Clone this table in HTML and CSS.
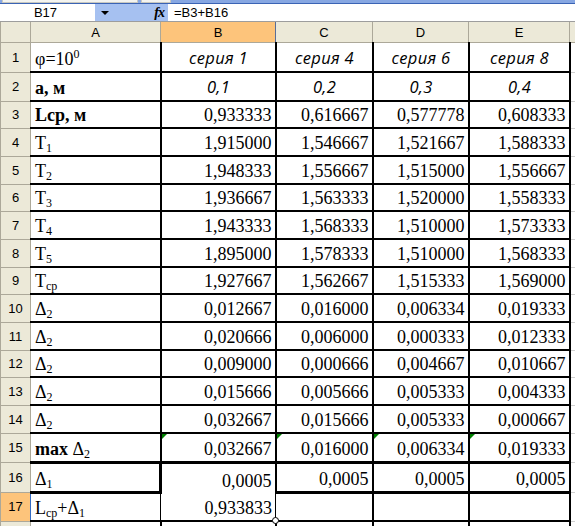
FILE: index.html
```html
<!DOCTYPE html>
<html>
<head>
<meta charset="utf-8">
<link rel="stylesheet" href="styles.css">
</head>
<body>
<div class="app">
  <div class="topstrip"><div class="tb tb1"></div><div class="tb tb2"></div><div class="tb3"></div></div>
  <div class="fbar">
    <div class="namebox">B17</div>
    <div class="nbdrop"><span class="arrow"></span><span class="fx">fx</span></div>
    <div class="formula">=B3+B16</div>
  </div>
  <table class="sheet">
    <colgroup>
      <col class="w-rh"><col class="w-a"><col class="w-b"><col class="w-c"><col class="w-d"><col class="w-e"><col class="w-f">
    </colgroup>
    <thead>
      <tr class="hdr"><th class="corner"></th><th>A</th><th class="sel">B</th><th>C</th><th>D</th><th>E</th><th></th></tr>
    </thead>
    <tbody>
      <tr class="r1"><th>1</th><td class="lab">φ=10<sup>0</sup></td><td class="ser">серия 1</td><td class="ser">серия 4</td><td class="ser">серия 6</td><td class="ser">серия 8</td><td class="f"></td></tr>
      <tr class="r28"><th>2</th><td class="lab b">а, м</td><td class="ser">0,1</td><td class="ser">0,2</td><td class="ser">0,3</td><td class="ser">0,4</td><td class="f"></td></tr>
      <tr class="r27"><th>3</th><td class="lab b">Lcp, м</td><td class="n">0,933333</td><td class="n">0,616667</td><td class="n">0,577778</td><td class="n">0,608333</td><td class="f"></td></tr>
      <tr class="r28"><th>4</th><td class="lab">T<sub>1</sub></td><td class="n">1,915000</td><td class="n">1,546667</td><td class="n">1,521667</td><td class="n">1,588333</td><td class="f"></td></tr>
      <tr class="r28"><th>5</th><td class="lab">T<sub>2</sub></td><td class="n">1,948333</td><td class="n">1,556667</td><td class="n">1,515000</td><td class="n">1,556667</td><td class="f"></td></tr>
      <tr class="r27"><th>6</th><td class="lab">T<sub>3</sub></td><td class="n">1,936667</td><td class="n">1,563333</td><td class="n">1,520000</td><td class="n">1,558333</td><td class="f"></td></tr>
      <tr class="r28"><th>7</th><td class="lab">T<sub>4</sub></td><td class="n">1,943333</td><td class="n">1,568333</td><td class="n">1,510000</td><td class="n">1,573333</td><td class="f"></td></tr>
      <tr class="r28"><th>8</th><td class="lab">T<sub>5</sub></td><td class="n">1,895000</td><td class="n">1,578333</td><td class="n">1,510000</td><td class="n">1,568333</td><td class="f"></td></tr>
      <tr class="r27"><th>9</th><td class="lab">T<sub>cp</sub></td><td class="n">1,927667</td><td class="n">1,562667</td><td class="n">1,515333</td><td class="n">1,569000</td><td class="f"></td></tr>
      <tr class="r28"><th>10</th><td class="lab">Δ<sub>2</sub></td><td class="n">0,012667</td><td class="n">0,016000</td><td class="n">0,006334</td><td class="n">0,019333</td><td class="f"></td></tr>
      <tr class="r28"><th>11</th><td class="lab">Δ<sub>2</sub></td><td class="n">0,020666</td><td class="n">0,006000</td><td class="n">0,000333</td><td class="n">0,012333</td><td class="f"></td></tr>
      <tr class="r27"><th>12</th><td class="lab">Δ<sub>2</sub></td><td class="n">0,009000</td><td class="n">0,000666</td><td class="n">0,004667</td><td class="n">0,010667</td><td class="f"></td></tr>
      <tr class="r28"><th>13</th><td class="lab">Δ<sub>2</sub></td><td class="n">0,015666</td><td class="n">0,005666</td><td class="n">0,005333</td><td class="n">0,004333</td><td class="f"></td></tr>
      <tr class="r28"><th>14</th><td class="lab">Δ<sub>2</sub></td><td class="n">0,032667</td><td class="n">0,015666</td><td class="n">0,005333</td><td class="n">0,000667</td><td class="f"></td></tr>
      <tr class="r29"><th>15</th><td class="lab"><span class="b">max</span> Δ<sub>2</sub></td><td class="n err">0,032667</td><td class="n err">0,016000</td><td class="n err">0,006334</td><td class="n err">0,019333</td><td class="f"></td></tr>
      <tr class="r29 r16"><th>16</th><td class="lab">Δ<sub>1</sub></td><td class="n">0,0005</td><td class="n">0,0005</td><td class="n">0,0005</td><td class="n">0,0005</td><td class="f"></td></tr>
      <tr class="r28 r17"><th class="selrow">17</th><td class="lab">L<sub>cp</sub>+Δ<sub>1</sub></td><td class="n active">0,933833<span class="handle"></span></td><td class="n"></td><td class="n"></td><td class="n"></td><td class="f"></td></tr>
      <tr class="r28"><th></th><td class="lab"></td><td class="n"></td><td class="n"></td><td class="n"></td><td class="n"></td><td class="f"></td></tr>
    </tbody>
  </table>
</div>
</body>
</html>
```
FILE: styles.css
```css
html, body {
  margin: 0;
  padding: 0;
  background: #fff;
}
body {
  width: 575px;
  height: 526px;
  overflow: hidden;
}
.app {
  width: 575px;
}
.topstrip {
  height: 3px;
  display: flex;
  background: #87a7e2;
  border-bottom: 1px solid #3a63b4;
}
.tb {
  height: 2px;
  background: #f4f4f0;
  border: 1px solid #c8c8c0;
  border-top: none;
}
.tb1 { width: 134px; margin-left: 2px; }
.tb2 { width: 28px; margin-left: 3px; }
.tb3 { flex: 1; }
.fbar {
  height: 17px;
  display: flex;
  border-bottom: 1px solid #9d9d9d;
  font-family: "Liberation Sans", Arial, sans-serif;
  font-size: 13px;
  line-height: 17px;
}
.namebox {
  width: 95px;
  background: #fff;
  text-align: center;
  padding-right: 4px;
  box-sizing: border-box;
}
.nbdrop {
  width: 73px;
  background: #a6c1f1;
  display: flex;
  align-items: center;
  justify-content: space-between;
  padding: 0 4px 0 6px;
  box-sizing: border-box;
}
.arrow {
  width: 0;
  height: 0;
  border-left: 4px solid transparent;
  border-right: 4px solid transparent;
  border-top: 4px solid #000;
  margin-top: 1px;
}
.fx {
  font-family: "Liberation Serif", "Times New Roman", serif;
  font-style: italic;
  font-weight: bold;
  font-size: 14px;
  letter-spacing: -1px;
}
.formula {
  flex: 1;
  padding-left: 6px;
  background: #fff;
}
.sheet {
  border-collapse: collapse;
  table-layout: fixed;
  width: 580px;
}
.w-rh { width: 30px; }
.w-a { width: 130px; }
.w-b { width: 115px; }
.w-c { width: 97px; }
.w-d { width: 96px; }
.w-e { width: 101px; }
.w-f { width: 11px; }
.sheet th {
  background: #ece9d8;
  border: 1px solid #aca899;
  font-family: "Liberation Sans", Arial, sans-serif;
  font-size: 13px;
  font-weight: normal;
  color: #000;
  padding: 0;
  text-align: center;
}
.hdr th {
  height: 20px;
  border-top: none;
}
.hdr th.sel {
  background: #fdc47b;
  border-right: 1px solid #5a6e98;
}
.sheet tbody th {
  font-size: 13px;
}
.sheet th.selrow {
  background: #fdc47b;
  border-right: 1px solid #316ac5;
}
.r1 td, .r1 th { height: 26px; }
.r27 td, .r27 th { height: 24px; }
.r28 td, .r28 th { height: 25px; }
.r29 td, .r29 th { height: 26px; }
.sheet td {
  border: 2px solid #000;
  padding: 0 3px 1px 4px;
  font-family: "Liberation Serif", "Times New Roman", serif;
  font-size: 18px;
  color: #000;
  vertical-align: bottom;
  white-space: nowrap;
  overflow: hidden;
  position: relative;
  line-height: 22px;
}
.r1 td { border-top: none; }
.sheet td.lab {
  border-left: none;
  text-align: left;
}
.sheet td.b, .b { font-weight: bold; }
.sheet td.n { text-align: right; }
.sheet td.ser {
  text-align: center;
  font-family: "Open Sans", "Liberation Sans", Arial, sans-serif;
  font-style: italic;
  font-weight: 400;
  font-size: 16.5px;
  letter-spacing: 0.3px;
  color: #000;
  padding-bottom: 2px;
}
.sheet td.f {
  border: 1px solid #d0d0d0;
  padding: 0;
}
sup {
  font-size: 12px;
  vertical-align: 7px;
  line-height: 0;
}
sub {
  font-size: 12px;
  vertical-align: -3px;
  line-height: 0;
}
.r16 td { border-top-width: 3px; border-bottom-width: 3px; }
.r16 td.lab { border-right-width: 3px; }
.r16 td.n:nth-of-type(2) { border-bottom: none; }
.r17 td { border-top-width: 3px; }
.r17 td.lab { border-right: 1px solid #000; }
.r17 td.active {
  border-left: 1px solid #000;
  border-right: 1px solid #000;
  border-top: none;
  border-bottom: 1px solid #000;
  overflow: visible;
}
.r17 td.active + td { border-left: 1px solid #000; }
.r17 td.f { border-top: 1px solid #d0d0d0; }
.err::before {
  content: "";
  position: absolute;
  left: 0;
  top: 0;
  width: 0;
  height: 0;
  border-top: 5px solid #008000;
  border-right: 5px solid transparent;
}
.handle {
  position: absolute;
  right: -4px;
  bottom: -4px;
  width: 5px;
  height: 5px;
  border: 1px solid #000;
  border-radius: 50%;
  background: #fff;
}
```
